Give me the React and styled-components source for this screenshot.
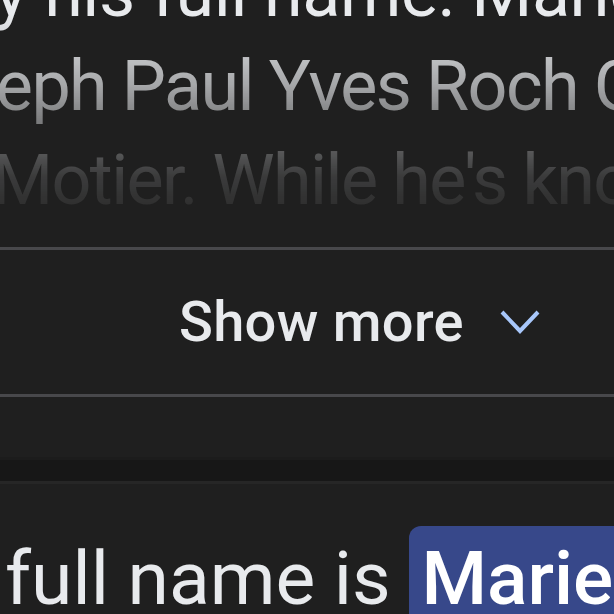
import React from "react";
import styled, { createGlobalStyle } from "styled-components";

const Global = createGlobalStyle`
  html, body { margin: 0; padding: 0; background: #1f1f1f; }
  body { width: 614px; height: 614px; overflow: hidden; }
  #root { width: 614px; height: 614px; }
`;

const Page = styled.div`
  width: 614px;
  height: 614px;
  overflow: hidden;
  background: #1f1f1f;
  font-family: Roboto, "Noto Sans", Arial, sans-serif;
  display: flex;
  flex-direction: column;
`;

const Snippet = styled.div`
  margin-top: -55px;
  -webkit-mask-image: linear-gradient(
    to bottom,
    #000 70px,
    rgba(0, 0, 0, 0.67) 140px,
    rgba(0, 0, 0, 0.14) 231px,
    rgba(0, 0, 0, 0.08) 262px
  );
  mask-image: linear-gradient(
    to bottom,
    #000 70px,
    rgba(0, 0, 0, 0.67) 140px,
    rgba(0, 0, 0, 0.14) 231px,
    rgba(0, 0, 0, 0.08) 262px
  );
`;

const Line = styled.div`
  font-size: 70px;
  line-height: 94px;
  color: #e8eaed;
  white-space: nowrap;
  letter-spacing: ${(p) => p.$tracking ?? -1.6}px;
  margin-left: ${(p) => p.$indent}px;
`;

const Divider = styled.div`
  height: 3px;
  background: ${(p) => p.$color || "#48484b"};
  flex-shrink: 0;
`;

const Spacer = styled.div`
  height: ${(p) => p.$h}px;
  flex-shrink: 0;
`;

const ShowMoreRow = styled.div`
  height: 144px;
  display: flex;
  align-items: center;
  padding-left: 179px;
  gap: 36px;
  flex-shrink: 0;
`;

const ShowMoreLabel = styled.span`
  font-size: 56px;
  font-weight: 500;
  letter-spacing: 0.3px;
  color: #e8eaed;
`;

const Band = styled.div`
  height: 21px;
  background: #171717;
  border-top: 3px solid #1c1c1c;
  flex-shrink: 0;
`;

const Answer = styled.div`
  font-size: 75px;
  line-height: 94px;
  color: #e8eaed;
  white-space: nowrap;
  margin-left: 5px;
  margin-top: 47px;
`;

const Highlight = styled.span`
  background: #37488a;
  color: #ffffff;
  font-weight: 500;
  padding: 8px 40px 40px 12px;
  border-radius: 12px 0 0 0;
`;

const Chevron = () => (
  <svg width="40" height="26" viewBox="0 0 40 26" fill="none">
    <polyline
      points="2,3 20,22 38,3"
      stroke="#a8c7fa"
      strokeWidth="4"
      strokeLinecap="butt"
      strokeLinejoin="miter"
    />
  </svg>
);

export default function App() {
  return (
    <>
      <Global />
      <Page>
        <Snippet>
          <Line $indent={-44} $tracking={-0.4}>by his full name: Marie-</Line>
          <Line $indent={-114}>Joseph Paul Yves Roch Gilbert du</Line>
          <Line $indent={-8}>Motier. While he's known</Line>
        </Snippet>
        <Spacer $h={20} />
        <Divider />
        <ShowMoreRow>
          <ShowMoreLabel>Show more</ShowMoreLabel>
          <Chevron />
        </ShowMoreRow>
        <Divider />
        <Spacer $h={60} />
        <Band />
        <Divider $color="#262626" />
        <Answer>
          full name is <Highlight>Marie</Highlight>
        </Answer>
      </Page>
    </>
  );
}
